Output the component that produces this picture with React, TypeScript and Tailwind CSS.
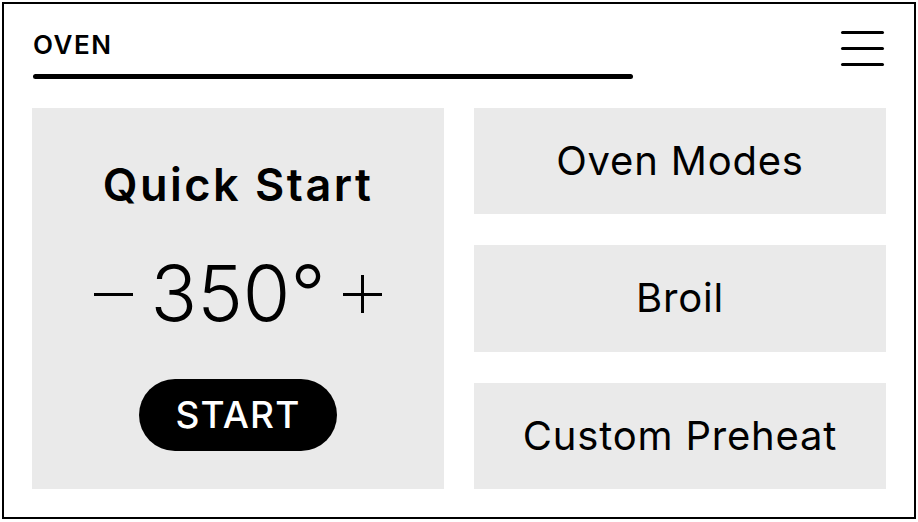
import React from "react";

const modes = ["Oven Modes", "Broil", "Custom Preheat"];

export default function App() {
  return (
    <div className="w-[918px] h-[522px] bg-white p-[2px] font-['Inter',sans-serif] text-black">
      <div className="w-[914px] h-[517px] border-2 border-black flex flex-col px-[28px] pb-[28px]">
        {/* header */}
        <div className="flex justify-between items-start h-[104px]">
          <div className="flex flex-col pt-[28px]">
            <span className="ml-[1px] text-[26px] leading-[26px] font-semibold tracking-[1.5px]">OVEN</span>
            <div className="mt-[16px] ml-[1px] w-[600px] h-[5px] rounded-full bg-black" />
          </div>
          <button className="mt-[27px] mr-[2px] flex flex-col gap-[13px] w-[43px]">
            <span className="block h-[3px] rounded-full bg-black" />
            <span className="block h-[3px] rounded-full bg-black" />
            <span className="block h-[3px] rounded-full bg-black" />
          </button>
        </div>

        <div className="flex-1 grid grid-cols-2 gap-[30px]">
          {/* quick start */}
          <div className="bg-[#eaeaea] flex flex-col items-center pt-[54px]">
            <h2 className="text-[45px] leading-none font-semibold tracking-[2.5px]">Quick Start</h2>
            <div className="mt-[48px] flex items-center gap-[18px] leading-none">
              <button aria-label="decrease">
                <svg width="39" height="38" viewBox="0 0 39 38">
                  <rect x="0" y="18" width="39" height="3" fill="black" />
                </svg>
              </button>
              <span className="text-[77px] font-light leading-none">350°</span>
              <button aria-label="increase">
                <svg width="39" height="38" viewBox="0 0 39 38">
                  <rect x="0" y="18" width="39" height="3" fill="black" />
                  <rect x="18" y="0" width="3" height="38" fill="black" />
                </svg>
              </button>
            </div>
            <button className="mt-[47px] w-[198px] h-[72px] rounded-full bg-black text-white text-[37px] font-medium tracking-[1.2px]">
              START
            </button>
          </div>

          {/* modes */}
          <div className="flex flex-col gap-[31px]">
            {modes.map((m) => (
              <button
                key={m}
                className="flex-1 bg-[#eaeaea] flex items-center justify-center text-[40px] font-normal tracking-[0.8px]"
              >
                {m}
              </button>
            ))}
          </div>
        </div>
      </div>
    </div>
  );
}
